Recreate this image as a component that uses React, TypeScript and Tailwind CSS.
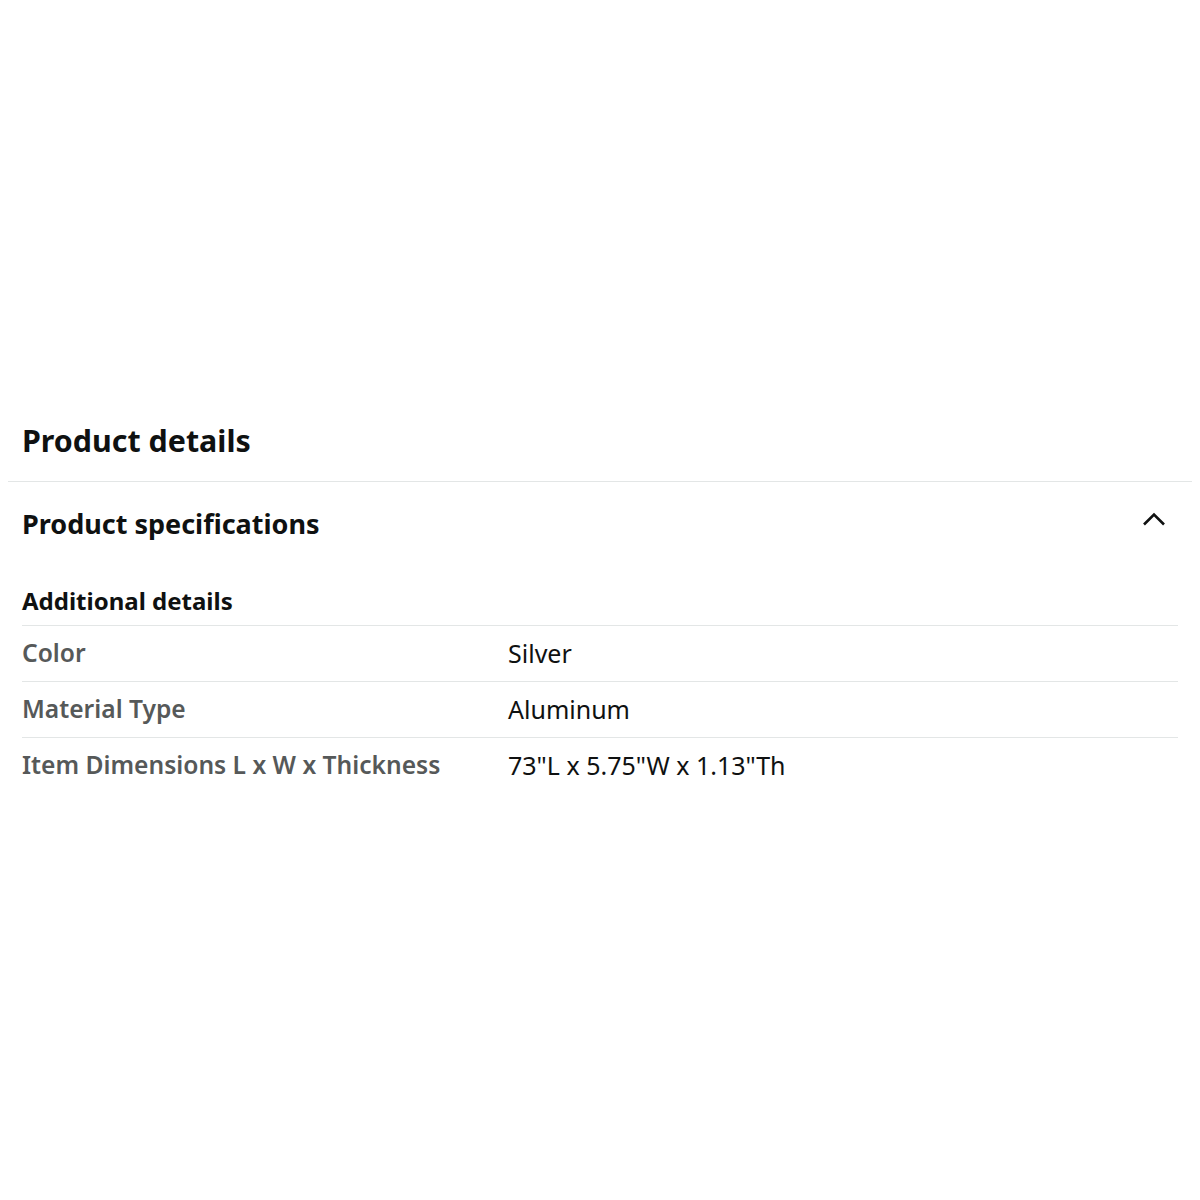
const specs = [
  { label: 'Color', value: 'Silver' },
  { label: 'Material Type', value: 'Aluminum' },
  { label: 'Item Dimensions L x W x Thickness', value: '73"L x 5.75"W x 1.13"Th' },
];

export default function App() {
  return (
    <div className="h-[1200px] w-[1200px] bg-white font-['Noto_Sans',sans-serif] text-[#0f1111]">
      <div className="pt-[418px]">
        <h2 className="px-[22px] text-[30.4px] font-bold leading-[46px]">Product details</h2>
        <div className="mx-[8px] mt-[17px] border-t border-[#e3e6e6]" />
        <div className="flex items-center justify-between px-[22px] pt-[19px]">
          <h3 className="text-[27px] font-bold leading-[46px]">Product specifications</h3>
          <svg width="24" height="14" viewBox="0 0 24 14" className="mr-[12px] mt-[-10px]" fill="none" stroke="#0f1111" strokeWidth="2.6">
            <path d="M2 12.5 L12 2.5 L22 12.5" />
          </svg>
        </div>
        <div className="px-[22px] pt-[38px]">
          <h4 className="pb-[8px] text-[24px] font-bold leading-[32px]">Additional details</h4>
          {specs.map((s) => (
            <div key={s.label} className="flex h-[56px] items-center border-t border-[#e3e6e6]">
              <span className="w-[486px] text-[24.6px] font-semibold text-[#565959]">{s.label}</span>
              <span className="text-[25px]">{s.value}</span>
            </div>
          ))}
        </div>
      </div>
    </div>
  );
}
